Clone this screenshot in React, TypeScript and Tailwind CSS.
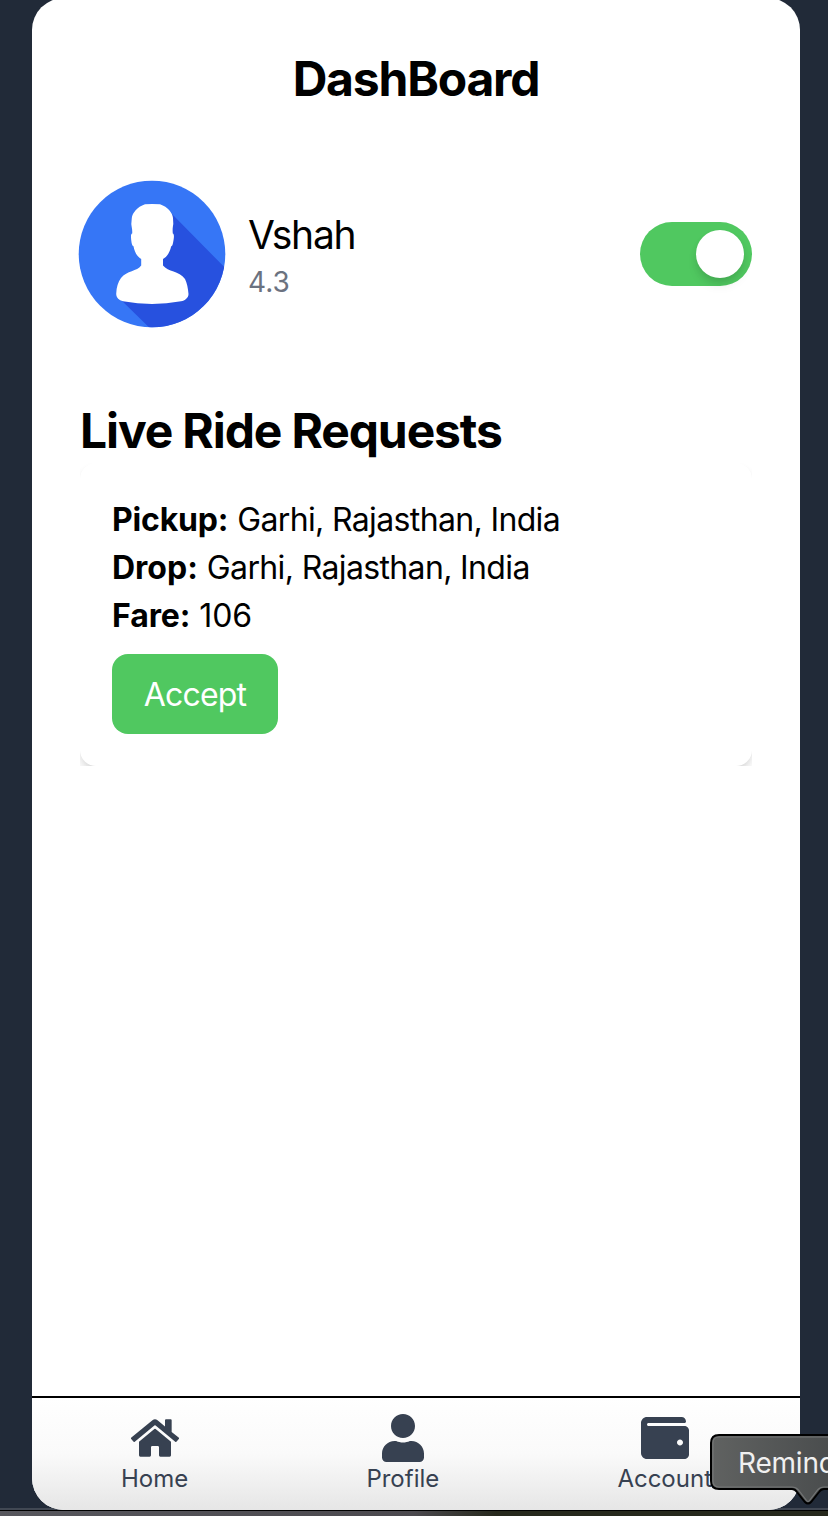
import { FaHome, FaUser, FaWallet } from "react-icons/fa";

const navItems = [
  { label: "Home", icon: FaHome },
  { label: "Profile", icon: FaUser },
  { label: "Account", icon: FaWallet },
];

function Avatar() {
  return (
    <svg className="size-[148px] shrink-0" viewBox="0 0 148 148">
      <defs>
        <clipPath id="disc"><circle cx="74" cy="74" r="73.3" /></clipPath>
      </defs>
      <circle cx="74" cy="74" r="73.3" fill="#3676f6" />
      <path clipPath="url(#disc)" fill="#2751df" d="M93 33 L160 101 V160 H84 L40 117 L70 90 Z" />
      <path
        fill="#fff"
        d="M67 24.300 Q74 23.500 82 24.300 C90 27 94.500 33 95 38 L95.300 44 C94.600 48 94.500 50 94.800 53.500 C96.500 54 96 58 95.200 62 C94.500 66 94 66 93.200 66.300 C92 72 89 77 85 79 L85 85.500 C90 92 101 90.500 107 99 C109 103 110 108 110.500 114 C110.500 118 107 120.500 103 121.300 Q74 126.500 45 121.300 C41 120 38.500 118 38.200 114 C38.500 107 40 102 43 98 C49 90.500 59 91.500 63.200 85.500 L63.200 79 C59 76.500 56.500 72 55.500 66.300 C54.200 66 53.700 64 53.200 60 C52.800 56 52.800 54 54.200 53.500 C54.500 49 53.500 47 53.300 44 L53.800 38 C54.500 33 59 27 67 24.300 Z"
      />
    </svg>
  );
}

export default function App() {
  return (
    <div className="relative flex h-[1516px] w-[828px] flex-col overflow-hidden bg-[#212a38] pr-[28px] pl-[32px] font-['Inter',sans-serif] text-black">
      <main className="relative z-10 -mt-[2px] flex h-[1512px] shrink-0 flex-col overflow-hidden rounded-[32px] bg-white">
        <h1 className="mt-[49px] text-center text-[48px] leading-[64px] font-bold tracking-[-1.2px]">DashBoard</h1>
        <section className="mt-[69px] flex h-[148px] items-center pr-[48px] pl-[46px]">
          <Avatar />
          <div className="ml-[22px] flex-1">
            <p className="relative top-px text-[39px] leading-[56px] tracking-[-1.3px]">Vshah</p>
            <p className="text-[28px] leading-[40px] text-[#6b7280]">4.3</p>
          </div>
          <div className="flex h-[64px] w-[112px] items-center justify-end rounded-full bg-[#50c860] pr-[8px]">
            <div className="size-[48px] rounded-full bg-white shadow-[0_8px_12px_-2px_rgba(0,0,0,0.1),0_4px_8px_-2px_rgba(0,0,0,0.1)]" />
          </div>
        </section>
        <h2 className="mt-[71px] pl-[48px] text-[48px] leading-[64px] font-bold tracking-[-1.13px]">Live Ride Requests</h2>
        <div className="mx-[48px] overflow-hidden">
          <article className="h-[303px] rounded-[16px] bg-white px-[32px] pt-[33px] text-[32px] leading-[48px] shadow-[0_8px_12px_-2px_rgba(0,0,0,0.1),0_4px_8px_-2px_rgba(0,0,0,0.1)]">
            <p><b className="tracking-[-0.2px]">Pickup:</b> <span className="tracking-[-0.64px]">Garhi, Rajasthan, India</span></p>
            <p><b>Drop:</b> <span className="tracking-[-0.64px]">Garhi, Rajasthan, India</span></p>
            <p><b className="tracking-[-0.1px]">Fare:</b> <span className="tracking-[-0.1px]">106</span></p>
            <button className="mt-[14px] h-[80px] w-[166px] rounded-[16px] bg-[#50c860] pt-[2px] tracking-[-0.85px] text-white">Accept</button>
          </article>
        </div>
        <nav className="mt-auto flex h-[114px] justify-between border-t-2 border-black bg-linear-to-b from-white via-[#fafafa] via-50% to-[#e6e6e6] pr-[88px] pl-[89px] pt-[16px] text-[24px] leading-[34px] text-[#374151]">
          {navItems.map(({ label, icon: Icon }) => (
            <div key={label} className="flex flex-col items-center">
              <Icon size={48} />
              <span>{label}</span>
            </div>
          ))}
        </nav>
      </main>
      <div className="absolute top-[1508px] left-0 h-[2px] w-[828px] bg-[#414853]" />
      <div className="absolute top-[1510px] left-0 z-10 h-[6px] w-[828px] border-t border-black bg-linear-to-r from-[#57575d] via-[#4b494e] via-50% to-[#26281c] to-60%" />
      <svg className="absolute top-[1430px] left-[706px] z-20 h-[80px] w-[122px]" viewBox="0 0 122 80">
        <defs>
          <linearGradient id="tip" x1="0" y1="0" x2="1" y2="0">
            <stop offset="0" stopColor="#606261" />
            <stop offset="1" stopColor="#474a4b" />
          </linearGradient>
        </defs>
        <path d="M13 5 H140 V59 H118 Q115 59 113 62 L105 72 Q102 75 99 72 L91 62 Q89 59 86 59 H13 Q5 59 5 51 V13 Q5 5 13 5 Z" fill="url(#tip)" stroke="#000" strokeWidth="2" />
        <path d="M13 7 H140 V57 H118 Q114 57 111.500 60 L103.500 70.500 Q102 72.500 100.500 70.500 L92.500 60 Q90 57 86 57 H13 Q7 57 7 51 V13 Q7 7 13 7 Z" fill="none" stroke="#747676" strokeWidth="1.2" />
      </svg>
      <span className="absolute top-[1445px] left-[738px] z-30 w-[90px] overflow-hidden text-[28px] leading-[36px] tracking-[-0.2px] whitespace-nowrap text-[#f0f0f0]">Reminders</span>
    </div>
  );
}
